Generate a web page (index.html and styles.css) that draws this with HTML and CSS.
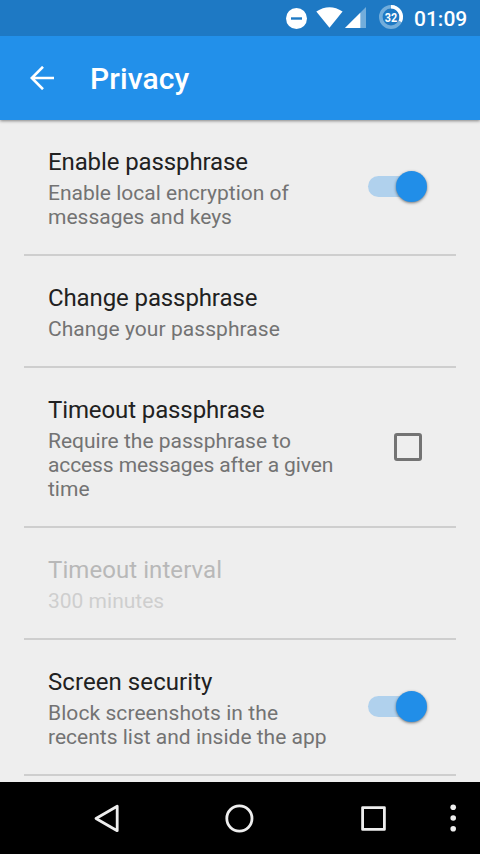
FILE: index.html
```html
<!DOCTYPE html>
<html lang="en">
<head>
<meta charset="utf-8">
<title>Privacy</title>
<link rel="stylesheet" href="styles.css">
</head>
<body>
<div class="screen">
  <div class="status">
    <svg class="status-icons" width="144" height="36" viewBox="270 0 144 36" aria-hidden="true">
      <circle cx="296.5" cy="18.5" r="10.5" fill="#fff"/>
      <path d="M291 18.5h11" stroke="#1e79c4" stroke-width="2.4"/>
      <path d="M316.3 11.5Q329.5 3 342.6 11.5L329.5 27.8Z" fill="#fff"/>
      <path d="M366 7v21h-21Z" fill="#72addb"/>
      <path d="M360.3 12.7V28H345Z" fill="#fff"/>
      <circle cx="391" cy="17" r="10.2" fill="none" stroke="#72addb" stroke-width="3.6"/>
      <path d="M391 6.8A10.2 10.2 0 0 1 400.2 21.4" fill="none" stroke="#fff" stroke-width="3.6"/>
      <text class="battery" x="391" y="21.8" text-anchor="middle" textLength="12.4" lengthAdjust="spacingAndGlyphs">32</text>
    </svg>
    <span class="clock">01:09</span>
  </div>
  <header class="toolbar">
    <svg class="back" width="24" height="24" viewBox="0 0 24 24" aria-hidden="true">
      <path d="M24 12H2M13 .8L1.8 12 13 23.2" fill="none" stroke="#fff" stroke-width="2.6"/>
    </svg>
    <h1>Privacy</h1>
  </header>
  <main class="list">
    <section class="row">
      <div class="text"><h2 class="tight">Enable passphrase</h2><p>Enable local encryption of<br>messages and keys</p></div>
      <div class="switch"><div class="thumb"></div></div>
    </section>
    <section class="row">
      <div class="text"><h2 class="tight">Change passphrase</h2><p class="loose">Change your passphrase</p></div>
    </section>
    <section class="row">
      <div class="text"><h2 class="tight">Timeout passphrase</h2><p>Require the passphrase to<br><span class="tight">access messages after a given</span><br>time</p></div>
      <div class="checkbox"></div>
    </section>
    <section class="row disabled">
      <div class="text"><h2 class="loose">Timeout interval</h2><p>300 minutes</p></div>
    </section>
    <section class="row">
      <div class="text"><h2 class="loose">Screen security</h2><p><span class="loose">Block screenshots in the</span><br>recents list and inside the app</p></div>
      <div class="switch"><div class="thumb"></div></div>
    </section>
  </main>
  <nav class="navbar">
    <svg width="480" height="72" viewBox="0 782 480 72" fill="none" stroke="#eee" stroke-width="2.8" stroke-linejoin="round" aria-hidden="true">
      <path d="M117.2 806.3v24.4L96 818.5Z"/>
      <circle cx="239.4" cy="818.5" r="12.6"/>
      <rect x="362.6" y="807.6" width="21.8" height="21.8"/>
      <g fill="#eee" stroke="none"><circle cx="453.2" cy="807.2" r="2.8"/><circle cx="453.2" cy="818" r="2.8"/><circle cx="453.2" cy="828.8" r="2.8"/></g>
    </svg>
  </nav>
</div>
</body>
</html>
```
FILE: styles.css
```css
* { box-sizing: border-box; }
body {
  margin: 0;
  font-family: Roboto, "Liberation Sans", sans-serif;
  background: #eee;
}
h1, h2, p { margin: 0; font-weight: 400; }
svg { display: block; flex: none; }
.screen {
  display: flex;
  flex-direction: column;
  width: 480px;
  height: 854px;
  overflow: hidden;
}
.status {
  display: flex;
  flex: none;
  justify-content: flex-end;
  height: 36px;
  padding-right: 12px;
  background: #1e79c4;
  color: #fff;
  z-index: 2;
}
.battery { font-size: 12px; font-weight: 700; fill: #fff; }
.clock {
  width: 54px;
  font-size: 21px;
  font-weight: 500;
  line-height: 38px;
  white-space: nowrap;
}
.toolbar {
  display: flex;
  flex: none;
  align-items: center;
  gap: 36px;
  height: 84px;
  padding-left: 30px;
  background: #2290ea;
  color: #fff;
  box-shadow: 0 1px 3px rgba(0, 0, 0, .45);
  z-index: 1;
}
.toolbar h1 {
  font-size: 30px;
  font-weight: 500;
  line-height: 36px;
  padding-top: 2px;
  letter-spacing: .1px;
}
.list { flex: 1; min-height: 0; padding: 0 24px; overflow: hidden; }
.row {
  display: flex;
  justify-content: space-between;
  align-items: center;
  padding: 28px 24px 25px;
  border-bottom: 2px solid #cecece;
}
.text { flex: none; white-space: nowrap; }
.text h2 {
  margin-bottom: 5px;
  font-size: 24px;
  line-height: 28px;
  color: #212121;
}
.text p { font-size: 21px; line-height: 24px; color: #737373; }
.tight { letter-spacing: -.11px; }
.loose { letter-spacing: .07px; }
.disabled .text h2 { color: #b8b8b8; }
.disabled .text p { color: #cecece; }
.switch {
  display: flex;
  align-items: center;
  justify-content: flex-end;
  width: 58px;
  height: 21px;
  margin: 0 6px 4px 0;
  border-radius: 11px;
  background: #b0d1ed;
}
.thumb {
  flex: none;
  width: 31px;
  height: 31px;
  margin-right: -1px;
  border-radius: 50%;
  background: #218ee8;
  box-shadow: 0 1px 3px rgba(0, 0, 0, .5);
}
.checkbox {
  width: 28px;
  height: 28px;
  margin: 0 10px 4px 0;
  border: 3px solid #737373;
  border-radius: 3px;
}
.navbar { flex: none; height: 72px; background: #000; }
```
